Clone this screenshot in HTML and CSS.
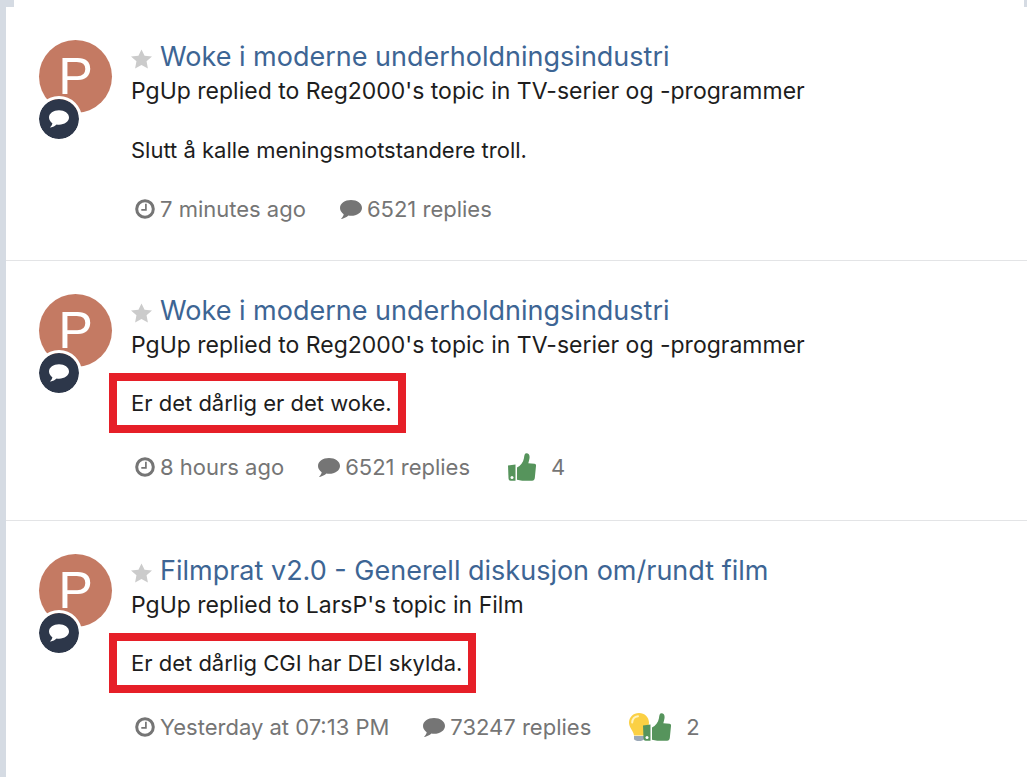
FILE: index.html
```html
<!DOCTYPE html>
<html lang="nb">

<head>
  <meta charset="UTF-8">
  <meta name="viewport" content="width=device-width, initial-scale=1.0">
  <link rel="stylesheet" href="styles.css">
  <title>Activity</title>
</head>

<body>

  <!-- shared icons -->
  <svg class="sprite" aria-hidden="true">
    <symbol id="icon-star" viewBox="0 0 22 20">
      <path d="M11 0l3.2 6.6 7.8.7-5.7 5.1L17.7 20 11 16.2 4.300 20l1.400-7.600L0 7.300l7.800-.7z" />
    </symbol>
    <symbol id="icon-clock" viewBox="0 0 20 20">
      <circle cx="10" cy="10" r="8.300" fill="none" stroke="currentColor" stroke-width="3" />
      <path d="M10.900 4.800v6.100H6.300" fill="none" stroke="currentColor" stroke-width="1.700" />
    </symbol>
    <symbol id="icon-comment" viewBox="0 0 22 19">
      <path d="M11 0c6.100 0 11 3.500 11 7.900s-4.900 7.900-11 7.900c-.9 0-1.800-.1-2.600-.2-1.900 1.700-4 2.800-6.600 3.300-.5.100-.7-.4-.3-.7 1-.9 1.900-2.100 2.200-4C1.800 12.800 0 10.500 0 7.900 0 3.500 4.900 0 11 0z" />
    </symbol>
    <symbol id="icon-thumb" viewBox="0 0 28 28">
      <path d="M0 12.500l7.500-1v16.200H2.600C1 27.700.6 26.800.5 25z" fill="#56945c" />
      <path d="M9 14.500c3.600-1.700 6.200-4.900 7-9.500C16.300 2.200 16.800.3 18.400.3c2.600 0 3.500 2.200 3.100 4.900-.2 1.700-.8 3.400-1.200 5l6.200.5c1.300.1 1.700 1.200 1.500 2.400L26.800 25c-.2 1.700-1 2.600-2.700 2.700-5.300.4-10.400.1-15.100-1z" fill="#56945c" />
      <circle cx="4" cy="24.500" r="1.500" fill="#fff" />
    </symbol>
    <symbol id="icon-bulb" viewBox="0 0 20 28">
      <path d="M10 0c5.600 0 10 4.200 10 9.600 0 5.100-4.200 7.700-5 12.900H5C4.200 17.300 0 14.700 0 9.600 0 4.200 4.400 0 10 0z" fill="#fbd044" />
      <path d="M3.200 9.500C3.400 6 5.700 3.600 9 3.200" fill="none" stroke="#fff3bd" stroke-width="2" stroke-linecap="round" />
      <path d="M5 23h10v3.200c-1 1.100-2.200 1.800-5 1.800s-4-.7-5-1.800z" fill="#9ba9b8" />
    </symbol>
  </svg>

  <main class="stream">
    <article class="item">
      <div class="avatar-wrapper">
        <a href="#" class="avatar" title="PgUp">P</a>
        <span class="badge"><svg class="badge-icon"><use href="#icon-comment" /></svg></span>
      </div>
      <div class="content">
        <h2 class="title"><svg class="star"><use href="#icon-star" /></svg><a href="#">Woke i moderne underholdningsindustri</a></h2>
        <p class="status">PgUp replied to Reg2000's topic in TV-serier og -programmer</p>
        <p class="text">Slutt å kalle meningsmotstandere troll.</p>
        <ul class="meta">
          <li><svg class="clock"><use href="#icon-clock" /></svg>7 minutes ago</li>
          <li><svg class="comment"><use href="#icon-comment" /></svg>6521 replies</li>
        </ul>
      </div>
    </article>

    <article class="item">
      <div class="avatar-wrapper">
        <a href="#" class="avatar" title="PgUp">P</a>
        <span class="badge"><svg class="badge-icon"><use href="#icon-comment" /></svg></span>
      </div>
      <div class="content">
        <h2 class="title"><svg class="star"><use href="#icon-star" /></svg><a href="#">Woke i moderne underholdningsindustri</a></h2>
        <p class="status">PgUp replied to Reg2000's topic in TV-serier og -programmer</p>
        <p class="text marked">Er det dårlig er det woke.</p>
        <ul class="meta with-reactions">
          <li><svg class="clock"><use href="#icon-clock" /></svg>8 hours ago</li>
          <li><svg class="comment"><use href="#icon-comment" /></svg>6521 replies</li>
          <li class="reactions"><svg class="thumb"><use href="#icon-thumb" /></svg><span class="count">4</span></li>
        </ul>
      </div>
    </article>

    <article class="item">
      <div class="avatar-wrapper">
        <a href="#" class="avatar" title="PgUp">P</a>
        <span class="badge"><svg class="badge-icon"><use href="#icon-comment" /></svg></span>
      </div>
      <div class="content">
        <h2 class="title"><svg class="star"><use href="#icon-star" /></svg><a href="#">Filmprat v2.0 - Generell diskusjon om/rundt film</a></h2>
        <p class="status">PgUp replied to LarsP's topic in Film</p>
        <p class="text marked">Er det dårlig CGI har DEI skylda.</p>
        <ul class="meta with-reactions">
          <li><svg class="clock"><use href="#icon-clock" /></svg>Yesterday at 07:13 PM</li>
          <li><svg class="comment"><use href="#icon-comment" /></svg>73247 replies</li>
          <li class="reactions"><svg class="bulb"><use href="#icon-bulb" /></svg><svg class="thumb"><use href="#icon-thumb" /></svg><span class="count">2</span></li>
        </ul>
      </div>
    </article>
  </main>

</body>

</html>
```

FILE: styles.css
```css
body {
  margin: 0;
  background-color: #fff;
  color: #1d1d1d;
  font-family: Inter, "Liberation Sans", sans-serif;
}

.sprite {
  display: none;
}

svg {
  flex: none;
  fill: currentColor;
}

.stream {
  position: relative;
  box-sizing: border-box;
  min-height: 100vh;
  padding-top: 7px;
  border-left: 6px solid #d5dbe3;
}

/* corners of the panel above */
.stream::before,
.stream::after {
  content: "";
  position: absolute;
  top: 0;
  left: 0;
  width: 8px;
  height: 7px;
  background-color: #d5dbe3;
}

.stream::after {
  left: auto;
  right: 0;
  width: 3px;
}

.item {
  display: flex;
  gap: 19px;
  padding: 33px 33px 35px;
  border-bottom: 1px solid #e3e4e6;
}

.item:last-child {
  border-bottom: none;
  padding-bottom: 0;
}

.avatar-wrapper {
  position: relative;
  flex: none;
  width: 73px;
}

.avatar {
  display: block;
  height: 73px;
  border-radius: 50%;
  background-color: #c47a63;
  color: #fff;
  font-family: "Liberation Sans", Arial, sans-serif;
  font-size: 52px;
  line-height: 73px;
  text-align: center;
  text-decoration: none;
}

.badge {
  position: absolute;
  top: 56px;
  left: -3px;
  display: flex;
  align-items: center;
  justify-content: center;
  width: 40px;
  height: 40px;
  border: 3px solid #fff;
  border-radius: 50%;
  background-color: #2d374a;
  background-clip: padding-box;
  color: #fff;
}

.badge-icon {
  width: 20px;
  height: 18px;
}

.content {
  flex: 1;
  min-width: 0;
}

.title {
  display: flex;
  align-items: center;
  gap: 8px;
  margin: 0;
  font-size: 27px;
  font-weight: normal;
  line-height: 34px;
}

.title a {
  color: #3d6594;
  text-decoration: none;
}

.star {
  width: 21px;
  height: 20px;
  margin-top: 3px;
  color: #cbcbcb;
}

.status {
  margin: 0;
  font-size: 23px;
  line-height: 34px;
}

.text {
  margin: 27px 0 28px;
  font-size: 22px;
  line-height: 30px;
}

/* red frame around the quoted line */
.marked {
  width: fit-content;
  margin: 11px -22px 16px;
  padding: 7px 6px 7px 14px;
  border: 8px solid #e61f28;
}

.meta {
  display: flex;
  flex-wrap: wrap;
  gap: 0 34px;
  margin: 0;
  padding: 0 0 0 4px;
  color: #757575;
  font-size: 22px;
  line-height: 32px;
  list-style: none;
}

.meta li {
  display: flex;
  align-items: center;
  gap: 5px;
}

.with-reactions {
  line-height: 36px;
}

.clock {
  width: 20px;
  height: 20px;
}

.comment {
  width: 22px;
  height: 19px;
}

.thumb {
  width: 28px;
  height: 28px;
}

.bulb {
  width: 20px;
  height: 28px;
}

.meta .reactions {
  gap: 0;
  padding-left: 4px;
}

.bulb + .thumb {
  margin-left: -6px;
}

.count {
  padding-left: 15px;
}
```
